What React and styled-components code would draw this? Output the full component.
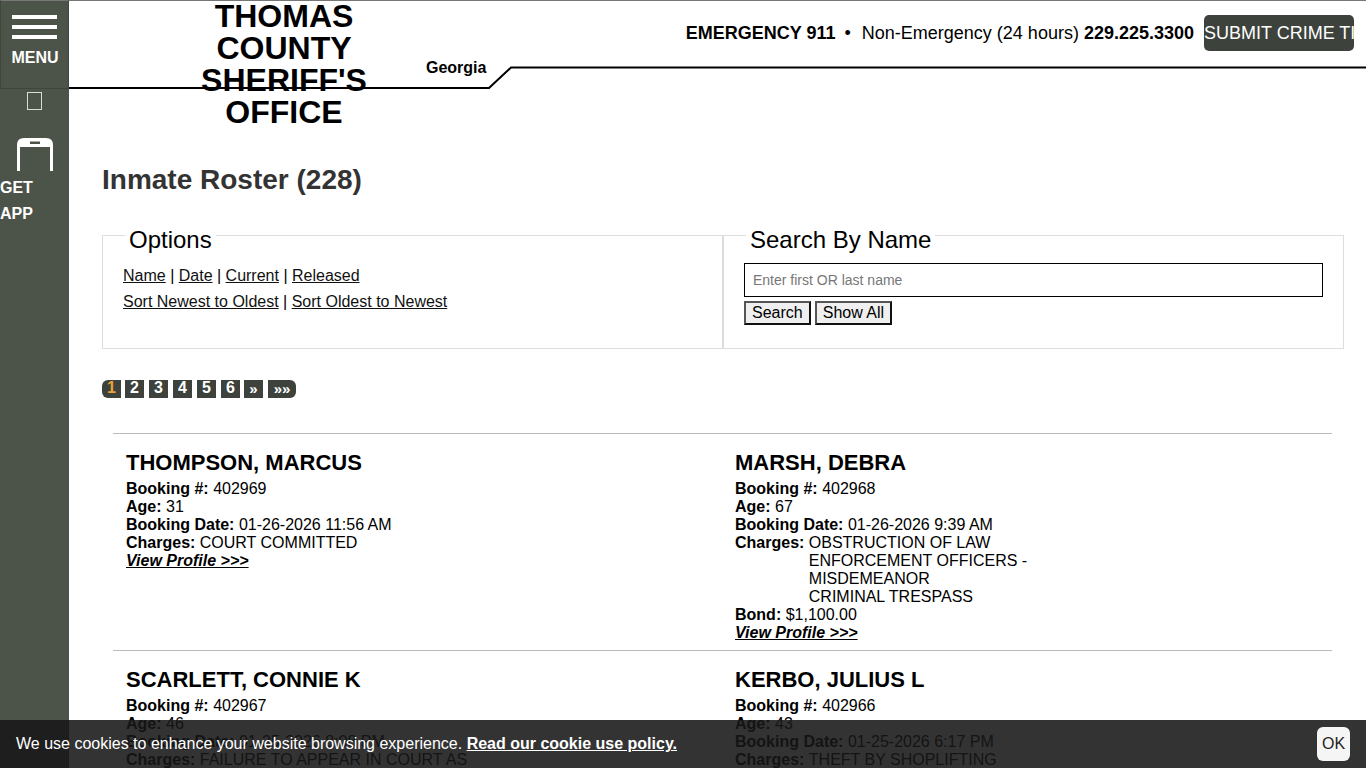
import React from 'react';
import styled, { createGlobalStyle } from 'styled-components';

const inmates = [
  [
    {
      name: 'THOMPSON, MARCUS',
      booking: '402969',
      age: '31',
      date: '01-26-2026 11:56 AM',
      charges: ['COURT COMMITTED'],
    },
    {
      name: 'MARSH, DEBRA',
      booking: '402968',
      age: '67',
      date: '01-26-2026 9:39 AM',
      charges: ['OBSTRUCTION OF LAW ENFORCEMENT OFFICERS - MISDEMEANOR', 'CRIMINAL TRESPASS'],
      bond: '$1,100.00',
    },
  ],
  [
    {
      name: 'SCARLETT, CONNIE K',
      booking: '402967',
      age: '46',
      date: '01-25-2026 8:08 PM',
      charges: ['FAILURE TO APPEAR IN COURT AS'],
    },
    {
      name: 'KERBO, JULIUS L',
      booking: '402966',
      age: '43',
      date: '01-25-2026 6:17 PM',
      charges: ['THEFT BY SHOPLIFTING'],
    },
  ],
];

const pages = ['2', '3', '4', '5', '6'];

export default function App() {
  return (
    <Page>
      <GlobalStyle />
      <Sidebar>
        <MenuButton>
          <Bars>
            <span />
            <span />
            <span />
          </Bars>
          <MenuLabel>MENU</MenuLabel>
        </MenuButton>
        <Tofu />
        <PhoneIcon viewBox="0 0 36 33">
          <path d="M0 33V7Q0 0 7 0H29Q36 0 36 7V33H33V9H3V33Z" fill="#fff" />
          <rect x="13" y="3.500" width="10" height="2.500" fill="#4c5449" />
        </PhoneIcon>
        <AppLabel>GET<br />APP</AppLabel>
      </Sidebar>
      <Main>
        <Header>
          <HeaderLine viewBox="0 0 1297 90" preserveAspectRatio="none">
            <path d="M0 88H420L442 67.500H1297" fill="none" stroke="#000" strokeWidth="2" />
          </HeaderLine>
          <Title>THOMAS COUNTY SHERIFF'S OFFICE</Title>
          <State>Georgia</State>
          <Contact>
            <b>EMERGENCY 911</b>
            <Dot>•</Dot>
            Non-Emergency (24 hours) <b>229.225.3300</b>
          </Contact>
          <TipButton>SUBMIT CRIME TIP</TipButton>
        </Header>
        <Content>
          <Heading>Inmate Roster (228)</Heading>
          <Panels>
            <Panel>
              <Legend>Options</Legend>
              <OptionRow>
                <a>Name</a> | <a>Date</a> | <a>Current</a> | <a>Released</a>
              </OptionRow>
              <OptionRow>
                <a>Sort Newest to Oldest</a> | <a>Sort Oldest to Newest</a>
              </OptionRow>
            </Panel>
            <Panel>
              <Legend>Search By Name</Legend>
              <SearchInput placeholder="Enter first OR last name" />
              <ButtonRow>
                <FormButton>Search</FormButton>
                <FormButton>Show All</FormButton>
              </ButtonRow>
            </Panel>
          </Panels>
          <Pager>
            <CurrentPage>1</CurrentPage>
            {pages.map((p) => (
              <PageLink key={p}>{p}</PageLink>
            ))}
            <NextLink>»</NextLink>
            <LastLink>»»</LastLink>
          </Pager>
          <Roster>
            {inmates.map((row) => (
              <Row key={row[0].booking}>
                {row.map((person) => (
                  <Card key={person.booking}>
                    <Name>{person.name}</Name>
                    <Line><b>Booking #:</b> {person.booking}</Line>
                    <Line><b>Age:</b> {person.age}</Line>
                    <Line><b>Booking Date:</b> {person.date}</Line>
                    <ChargeLine>
                      <b>Charges:</b>
                      <ChargeList>
                        {person.charges.map((c) => (
                          <div key={c}>{c}</div>
                        ))}
                      </ChargeList>
                    </ChargeLine>
                    {person.bond && <Line><b>Bond:</b> {person.bond}</Line>}
                    <Profile>View Profile &gt;&gt;&gt;</Profile>
                  </Card>
                ))}
              </Row>
            ))}
          </Roster>
        </Content>
      </Main>
      <CookieBar>
        <span>
          We use cookies to enhance your website browsing experience. <a>Read our cookie use policy.</a>
        </span>
        <OkButton>OK</OkButton>
      </CookieBar>
    </Page>
  );
}

const GlobalStyle = createGlobalStyle`
  html, body {
    margin: 0;
    height: 100%;
    overflow: hidden;
    background: #fff;
  }
  body {
    font: 16px "Liberation Sans", Arial, sans-serif;
    color: #000;
  }
`;

const Page = styled.div`
  display: flex;
  height: 768px;
  overflow: hidden;
  position: relative;
`;

const Sidebar = styled.div`
  width: 69px;
  flex: none;
  background: #4c5449;
  color: #fff;
  display: flex;
  flex-direction: column;
`;

const MenuButton = styled.div`
  height: 89px;
  box-sizing: border-box;
  border: 1px solid #3f463d;
  border-top-color: #777;
  display: flex;
  flex-direction: column;
  align-items: center;
`;

const Bars = styled.div`
  display: flex;
  flex-direction: column;
  gap: 6px;
  margin-top: 14px;

  span {
    display: block;
    width: 45px;
    height: 4px;
    background: #fff;
  }
`;

const MenuLabel = styled.div`
  font-size: 16px;
  font-weight: bold;
  line-height: 18px;
  margin: 10px 0 0 1px;
`;

const Tofu = styled.div`
  width: 15px;
  height: 18px;
  box-sizing: border-box;
  border: 1px solid #d8dbd6;
  margin: 3px 0 0 27px;
`;

const PhoneIcon = styled.svg`
  width: 36px;
  height: 33px;
  margin: 28px 0 0 17px;
`;

const AppLabel = styled.div`
  font-size: 16px;
  font-weight: bold;
  line-height: 26px;
  margin-top: 4px;
`;

const Main = styled.div`
  flex: 1;
  min-width: 0;
`;

const Header = styled.header`
  position: relative;
  height: 89px;
  box-sizing: border-box;
  border-top: 1px solid #777;
  display: flex;
  align-items: flex-start;
`;

const HeaderLine = styled.svg`
  position: absolute;
  left: 0;
  top: -1px;
  width: 100%;
  height: 90px;
`;

const Title = styled.div`
  position: relative;
  width: 190px;
  margin: -1px 0 0 120px;
  flex: none;
  font-size: 32px;
  font-weight: bold;
  line-height: 32px;
  text-align: center;
`;

const State = styled.div`
  position: relative;
  flex: none;
  margin: 58px 0 0 47px;
  font-size: 16px;
  font-weight: bold;
  line-height: 18px;
`;

const Contact = styled.div`
  flex: none;
  margin: 22px 0 0 auto;
  font-size: 18px;
  line-height: 21px;
  white-space: pre-wrap;
`;

const Dot = styled.span`
  margin: 0 11px 0 9px;
`;

const TipButton = styled.div`
  flex: none;
  width: 150px;
  height: 36px;
  margin: 14px 12px 0 10px;
  background: #3d423c;
  border-radius: 5px;
  color: #fff;
  font-size: 18px;
  line-height: 36px;
  white-space: nowrap;
  overflow: hidden;
`;

const Content = styled.div`
  padding: 0 22px 0 33px;
`;

const Heading = styled.h1`
  margin: 74px 0 0;
  font-size: 28px;
  line-height: 34px;
  font-weight: bold;
  color: #333;
`;

const Panels = styled.div`
  display: grid;
  grid-template-columns: 1fr 1fr;
  margin-top: 19px;
`;

const Panel = styled.fieldset`
  margin: 0;
  min-width: 0;
  height: 133px;
  box-sizing: border-box;
  border: 1px solid #ddd;
  padding: 0 20px;
`;

const Legend = styled.legend`
  margin-left: 2px;
  padding: 10px 4px 0;
  font-size: 24px;
  line-height: 28px;
`;

const OptionRow = styled.div`
  line-height: 26px;

  a {
    color: #111;
    text-decoration: underline;
  }

  &:first-of-type {
    margin-top: 9px;
  }
`;

const SearchInput = styled.input`
  display: block;
  width: 100%;
  height: 34px;
  box-sizing: border-box;
  margin-top: 9px;
  padding: 0 8px;
  border: 1px solid #000;
  font: 14px "Liberation Sans", Arial, sans-serif;
  outline: none;

  &::placeholder {
    color: #777;
  }
`;

const ButtonRow = styled.div`
  display: flex;
  gap: 4px;
  margin-top: 4px;
`;

const FormButton = styled.button`
  height: 24px;
  padding: 0 6px;
  background: #efefef;
  border: 2px solid #111;
  border-top-color: #555;
  border-left-color: #555;
  font: 16px "Liberation Sans", Arial, sans-serif;
  color: #000;
`;

const Pager = styled.div`
  display: flex;
  align-items: center;
  margin-top: 31px;
  height: 18px;
`;

const CurrentPage = styled.span`
  width: 19px;
  height: 18px;
  margin-right: -1px;
  background: #3d423c;
  border-radius: 6px 0 0 6px;
  color: #e8a33d;
  font-weight: bold;
  line-height: 16px;
  text-align: center;
`;

const PageLink = styled.span`
  width: 19px;
  height: 18px;
  margin-left: 5px;
  background: #3d423c;
  color: #fff;
  font-weight: bold;
  line-height: 16px;
  text-align: center;
`;

const NextLink = styled(PageLink)`
  margin-left: 4px;
  font-size: 15px;
  line-height: 18px;
`;

const LastLink = styled(NextLink)`
  width: 28px;
  margin-left: 5px;
  border-radius: 0 6px 6px 0;
`;

const Roster = styled.div`
  margin: 35px 12px 0 11px;
`;

const Row = styled.div`
  border-top: 1px solid #bbb;
  display: grid;
  grid-template-columns: 609px 1fr;
  padding: 17px 0 8px 13px;
`;

const Card = styled.div`
  line-height: 18px;
`;

const Name = styled.div`
  font-size: 22px;
  font-weight: bold;
  line-height: 24px;
  margin-bottom: 5px;
`;

const Line = styled.div`
  line-height: 18px;
`;

const ChargeLine = styled.div`
  display: flex;
  gap: 4.450px;
`;

const ChargeList = styled.div`
  max-width: 300px;
`;

const Profile = styled.a`
  display: block;
  font-weight: bold;
  font-style: italic;
  text-decoration: underline;
`;

const CookieBar = styled.div`
  position: absolute;
  left: 0;
  right: 0;
  bottom: 0;
  height: 48px;
  background: rgba(23, 23, 23, 0.88);
  color: #fff;
  display: flex;
  align-items: center;
  justify-content: space-between;
  padding: 0 16px;
  box-sizing: border-box;
  font-size: 16px;

  a {
    font-weight: bold;
    text-decoration: underline;
  }
`;

const OkButton = styled.div`
  width: 33px;
  height: 34px;
  background: #f5f5f5;
  border-radius: 6px;
  color: #222;
  line-height: 34px;
  text-align: center;
`;
